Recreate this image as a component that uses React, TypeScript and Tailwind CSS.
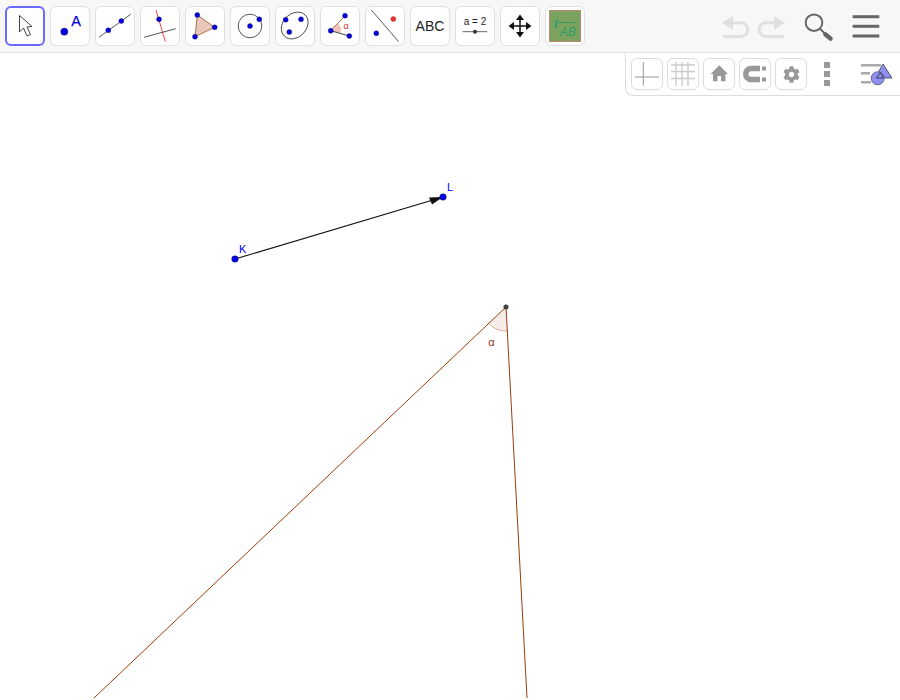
import type { ReactNode } from "react";
import { FaCog } from "react-icons/fa";

const BLUE = "#0000e0";

const Dot = ({ x, y, r = 2.5, fill = BLUE, stroke = "#1a1a5a" }: { x: number; y: number; r?: number; fill?: string; stroke?: string }) => (
  <circle cx={x} cy={y} r={r} fill={fill} stroke={stroke} strokeWidth={0.4} />
);

const Tool = ({ active, children }: { active?: boolean; children: ReactNode }) => (
  <button
    className={
      active
        ? "w-10 h-10 rounded-md border-2 border-[#6a6aff] bg-white flex items-center justify-center"
        : "w-10 h-10 rounded-md border border-[#e0e0e0] bg-white flex items-center justify-center"
    }
  >
    {children}
  </button>
);

const Icon = ({ children }: { children: ReactNode }) => (
  <svg width={40} height={40} viewBox="0 0 40 40" className="shrink-0">
    {children}
  </svg>
);

const StyleBtn = ({ children }: { children: ReactNode }) => (
  <button className="w-8 h-8 rounded-md border border-[#dcdcdc] bg-white flex items-center justify-center">
    {children}
  </button>
);

const PanelIcon = ({ children }: { children: ReactNode }) => (
  <svg width={32} height={32} viewBox="0 0 32 32" className="shrink-0">
    {children}
  </svg>
);

export default function App() {
  return (
    <div className="w-[900px] h-[700px] flex flex-col bg-white overflow-hidden font-['Liberation_Sans',Arial,sans-serif]">
      {/* toolbar */}
      <header className="h-[53px] shrink-0 flex items-start pt-[6px] pl-[5px] pr-4 bg-[#f7f7f7] border-b border-[#e0e0e0]">
        <div className="flex gap-[5px]">
          <Tool active>
            <Icon>
              <path d="M14.5 9.5V26L18.5 22L22 30L25.5 28.5L22 21L27 20.5Z" fill="#fff" stroke="#444" strokeWidth={1} />
            </Icon>
          </Tool>
          <Tool>
            <Icon>
              <Dot x={14.3} y={25.7} r={3.6} />
              <text x={26} y={19.5} fontSize={14.5} fill={BLUE} stroke={BLUE} strokeWidth={0.25} textAnchor="middle">A</text>
            </Icon>
          </Tool>
          <Tool>
            <Icon>
              <line x1={4} y1={31.3} x2={35.7} y2={8.3} stroke="#444" strokeWidth={0.9} />
              <Dot x={13.3} y={24.3} />
              <Dot x={26.3} y={15} />
            </Icon>
          </Tool>
          <Tool>
            <Icon>
              <line x1={16} y1={4} x2={25.3} y2={35.7} stroke="#f03030" strokeWidth={0.9} />
              <line x1={4} y1={31.3} x2={35.7} y2={22.7} stroke="#444" strokeWidth={0.9} />
              <Dot x={19} y={13.3} />
            </Icon>
          </Tool>
          <Tool>
            <Icon>
              <polygon points="12.3,9 29.7,21.3 10,30.7" fill="#e8c8ba" stroke="#a5623f" strokeWidth={0.9} />
              <Dot x={12.3} y={9} />
              <Dot x={29.7} y={21.3} />
              <Dot x={10} y={30.7} />
            </Icon>
          </Tool>
          <Tool>
            <Icon>
              <circle cx={20} cy={20} r={11.8} fill="none" stroke="#444" strokeWidth={0.9} />
              <Dot x={20} y={20} />
              <Dot x={29.3} y={13.3} />
            </Icon>
          </Tool>
          <Tool>
            <Icon>
              <ellipse cx={19.7} cy={19.5} rx={14.8} ry={11.8} transform="rotate(-45 19.7 19.5)" fill="none" stroke="#444" strokeWidth={0.9} />
              <Dot x={10.7} y={13.7} />
              <Dot x={14.3} y={26} />
              <Dot x={26} y={13.3} />
            </Icon>
          </Tool>
          <Tool>
            <Icon>
              <path d="M10.7 24.7L18 17.2A10 10 0 0 1 20.5 27Z" fill="#f3c2b8" />
              <line x1={10.7} y1={24.7} x2={25} y2={9.7} stroke="#a5623f" strokeWidth={0.9} />
              <line x1={10.7} y1={24.7} x2={29.3} y2={30} stroke="#333" strokeWidth={0.9} />
              <text x={26} y={23} fontSize={9} fill="#e03030" textAnchor="middle">α</text>
              <Dot x={10.7} y={24.7} />
              <Dot x={25} y={9.7} />
              <Dot x={29.3} y={30} />
            </Icon>
          </Tool>
          <Tool>
            <Icon>
              <line x1={6.3} y1={4} x2={33.7} y2={35.7} stroke="#444" strokeWidth={0.9} />
              <Dot x={28.3} y={13} fill="#ee2a2a" stroke="#903030" />
              <Dot x={11.3} y={27.3} />
            </Icon>
          </Tool>
          <Tool>
            <span className="text-[14px] leading-none text-[#222]">ABC</span>
          </Tool>
          <Tool>
            <Icon>
              <text x={20} y={18.5} fontSize={10} fill="#222" textAnchor="middle">a = 2</text>
              <line x1={7.7} y1={25.7} x2={32.3} y2={25.7} stroke="#555" strokeWidth={0.9} />
              <circle cx={20} cy={25.7} r={2} fill="#333" />
            </Icon>
          </Tool>
          <Tool>
            <Icon>
              <path d="M20 8.5L24 14H16ZM20 31.5L16 26H24ZM8.5 20L14 16V24ZM31.5 20L26 24V16Z" fill="#111" />
              <line x1={20} y1={12} x2={20} y2={28} stroke="#111" strokeWidth={1.5} />
              <line x1={12} y1={20} x2={28} y2={20} stroke="#111" strokeWidth={1.5} />
            </Icon>
          </Tool>
          <Tool>
            <div className="w-8 h-8 shrink-0 bg-[#7ba35f] border border-[#bb8a70] relative">
              <span className="absolute left-[4px] top-[5px] font-['Liberation_Serif',serif] italic font-bold text-[15px] leading-none text-[#2f9c68]">t</span>
              <span className="absolute left-[9px] right-[5px] top-[11px] h-px bg-[#2f9c68]" />
              <span className="absolute left-[10px] top-[15px] italic text-[12px] leading-none text-[#2f9c68]">AB</span>
            </div>
          </Tool>
        </div>

        <div className="ml-auto flex items-center mt-[2px]">
          <svg width={36} height={36} viewBox="0 0 36 36">
            <path d="M14 14.7H24A6.9 6.9 0 0 1 24 28.5H6" fill="none" stroke="#e0e0e0" strokeWidth={3} />
            <path d="M4.7 14.7L16 8V22Z" fill="#e0e0e0" />
          </svg>
          <svg width={36} height={36} viewBox="0 0 36 36">
            <path d="M23 14.7H13A6.9 6.9 0 0 0 13 28.5H31" fill="none" stroke="#e0e0e0" strokeWidth={3} />
            <path d="M32 14.7L21 8V22Z" fill="#e0e0e0" />
          </svg>
          <svg width={36} height={36} viewBox="0 0 36 36" className="ml-3">
            <circle cx={13} cy={14.7} r={8.3} fill="none" stroke="#666" strokeWidth={2} />
            <line x1={19} y1={20.7} x2={25} y2={26.7} stroke="#666" strokeWidth={2} />
            <line x1={24.5} y1={26.5} x2={29.5} y2={30.5} stroke="#666" strokeWidth={4.5} strokeLinecap="round" />
          </svg>
          <svg width={36} height={36} viewBox="0 0 36 36" className="ml-[11px]">
            <rect x={4.7} y={7.2} width={26.6} height={3} fill="#666" />
            <rect x={4.7} y={16.8} width={26.6} height={3} fill="#666" />
            <rect x={4.7} y={26.5} width={26.6} height={3} fill="#666" />
          </svg>
        </div>
      </header>

      {/* graphics view */}
      <main className="relative flex-1">
        <svg width={900} height={647} viewBox="0 53 900 647" className="block">
          <line x1={235} y1={259} x2={443} y2={197} stroke="#111" strokeWidth={1.1} />
          <polygon points="443,197 429,197.5 432,204.5" fill="#111" />
          <Dot x={235} y={259} r={3.3} />
          <Dot x={443} y={197} r={3.3} />
          <text x={239} y={253} fontSize={11} fill="#0000ff">K</text>
          <text x={447} y={191} fontSize={11} fill="#0000ff">L</text>

          <path d="M506 307L488.6 323.5A24 24 0 0 0 507.3 331Z" fill="#a0400f" fillOpacity={0.1} />
          <path d="M488.6 323.5A24 24 0 0 0 507.3 331" fill="none" stroke="#a0400f" strokeOpacity={0.45} strokeWidth={0.8} />
          <line x1={506} y1={307} x2={94} y2={698} stroke="#9a3c0c" strokeWidth={1} />
          <line x1={506} y1={307} x2={527} y2={698} stroke="#9a3c0c" strokeWidth={1} />
          <circle cx={506} cy={307} r={2.3} fill="#444" stroke="#222" strokeWidth={0.5} />
          <text x={491.5} y={346} fontSize={11} fill="#8a3a12" textAnchor="middle">α</text>
        </svg>

        {/* style bar */}
        <div className="absolute top-0 right-0 w-[275px] h-[43px] flex items-start pt-[5px] pl-[5px] bg-white border-l border-b border-[#dcdcdc] rounded-bl-lg">
          <div className="flex gap-1">
            <StyleBtn>
              <PanelIcon>
                <line x1={12.3} y1={4} x2={12.3} y2={27.7} stroke="#999" strokeWidth={1} />
                <line x1={4} y1={19} x2={28} y2={19} stroke="#999" strokeWidth={1} />
              </PanelIcon>
            </StyleBtn>
            <StyleBtn>
              <PanelIcon>
                <path d="M9 4V28M15 4V28M21 4V28M4 7H28M4 13.5H28M4 20.5H28" stroke="#ccc" strokeWidth={1.4} fill="none" />
              </PanelIcon>
            </StyleBtn>
            <StyleBtn>
              <PanelIcon>
                <path d="M16.3 7.3L7.7 16H10V23.3H14.5V18H18V23.3H22.5V16H25Z" fill="#999" />
              </PanelIcon>
            </StyleBtn>
            <StyleBtn>
              <PanelIcon>
                <path d="M21 10.5H12C5 10.5 5 21.5 12 21.5H21" fill="none" stroke="#999" strokeWidth={5.5} />
                <rect x={23} y={8.5} width={4} height={4} fill="#999" />
                <rect x={23} y={19.5} width={4} height={4} fill="#999" />
              </PanelIcon>
            </StyleBtn>
            <StyleBtn>
              <FaCog size={17} color="#999" />
            </StyleBtn>
          </div>
          <div className="ml-[17px] mt-1 flex flex-col gap-[3px]">
            <span className="w-[6px] h-[6px] bg-[#999]" />
            <span className="w-[6px] h-[6px] bg-[#999]" />
            <span className="w-[6px] h-[6px] bg-[#999]" />
          </div>
          <svg width={34} height={24} viewBox="0 0 34 24" className="ml-[30px] mt-[5px]">
            <path d="M1 2.3H21M1 10.3H10M1 19.3H11" stroke="#aaa" strokeWidth={2.4} fill="none" />
            <polygon points="23,1 32,15 15,15" fill="#8f8ff0" stroke="#555577" strokeWidth={1} />
            <circle cx={17.7} cy={15.3} r={6.5} fill="#8f8ff0" stroke="#555577" strokeWidth={0.8} />
            <path d="M20.5 9.5L16.5 15H23.5Z" fill="none" stroke="#333355" strokeWidth={0.9} />
          </svg>
        </div>
      </main>
    </div>
  );
}
